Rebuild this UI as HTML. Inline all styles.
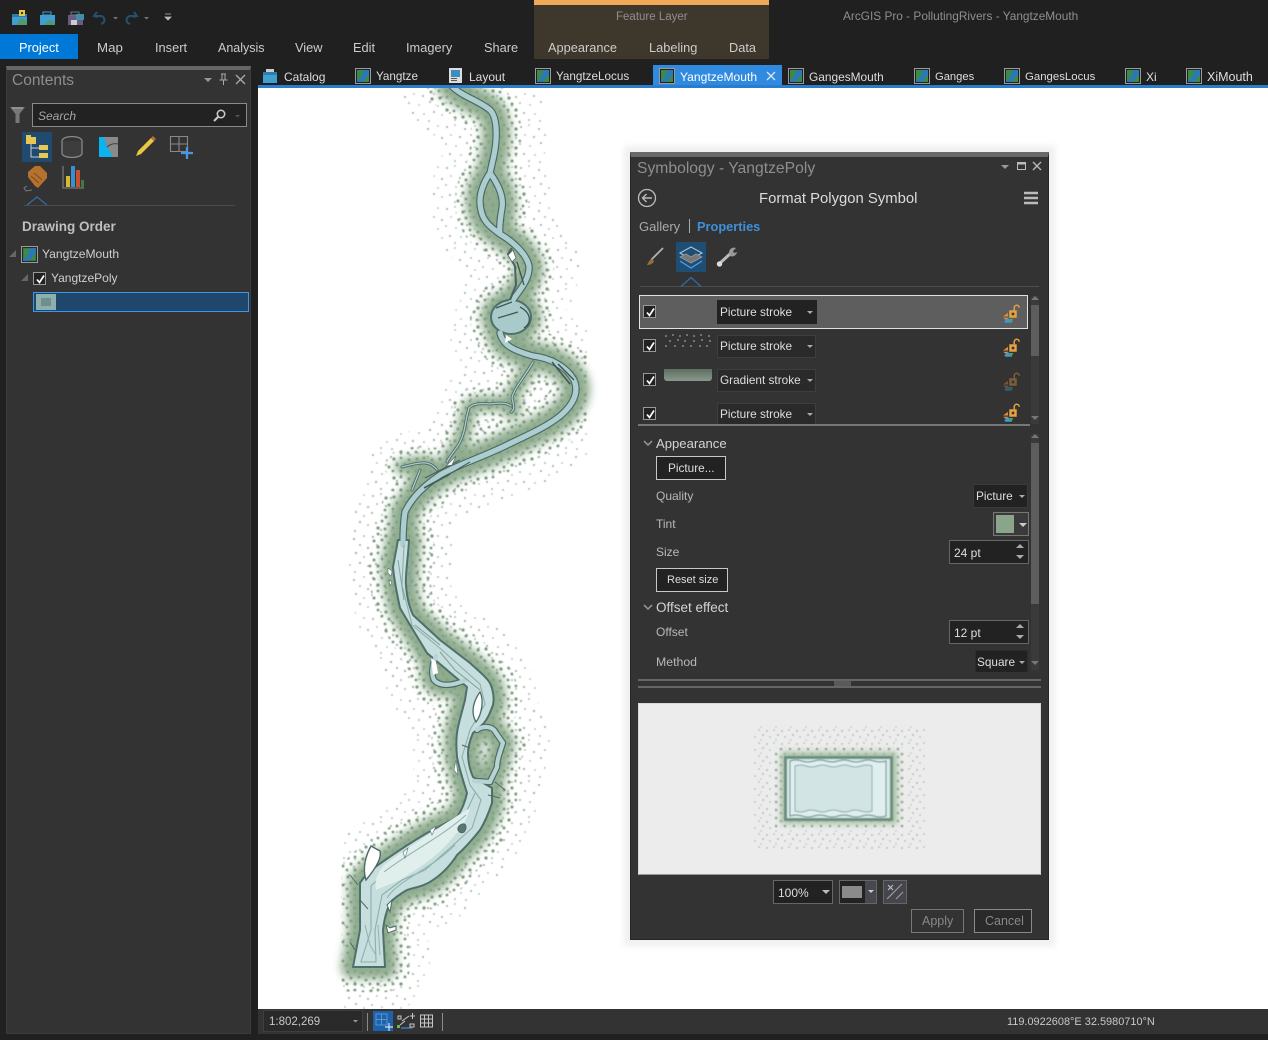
<!DOCTYPE html>
<html lang="en"><head><meta charset="utf-8"><title>ArcGIS Pro - PollutingRivers - YangtzeMouth</title>
<style>
html,body{margin:0;padding:0;background:#202020}
#r{position:relative;width:1268px;height:1040px;overflow:hidden;background:#202020;font-family:"Liberation Sans",sans-serif;font-size:12px;color:#ccc}
#r div,#r svg{position:absolute}
.t{white-space:nowrap;line-height:16px;height:16px;font-size:12px;color:#ccc}
.m{font-size:12.800px;top:40px}
.k{top:69px;color:#ddd;font-size:11.700px}
.s{font-size:11.800px;color:#dedede}
.b{box-sizing:border-box}
.dd{box-sizing:border-box;background:#222;border:1px solid #4a4a4a}
.btn{box-sizing:border-box;background:#222;border:1px solid #c8c8c8}
.ar{width:0;height:0;border-left:3px solid transparent;border-right:3px solid transparent;border-top:3px solid #aaa}
.up{width:0;height:0;border-left:4px solid transparent;border-right:4px solid transparent;border-bottom:4px solid #aaa}
.dn{width:0;height:0;border-left:4px solid transparent;border-right:4px solid transparent;border-top:4px solid #aaa}
.cb{box-sizing:border-box;width:13px;height:13px;background:#222;border:1px solid #999}
</style></head><body><div id="r">

<svg width="0" height="0" style="left:0;top:0"><defs>
<symbol id="mi" viewBox="0 0 16 16"><rect x=".5" y=".5" width="15" height="15" fill="#222" stroke="#9a9a9a"/><rect x="2" y="2" width="12" height="12" fill="#3a8a4a"/><path d="M9 2h5v5l-3 2-1 3-4 2H2v-2l4-2 1-4z" fill="#2b78b8"/></symbol>
<g id="lk"><path d="M0 6l4-3v3zM0 7h4v3z" fill="#e08a3a"/><path d="M1 10l3-3 3 4H2z" fill="#3a9ad8"/><path d="M5 8h3l-1 3z" fill="#5aa84a"/><rect x="5" y="1" width="6" height="6" fill="#e8a040"/><rect x="7" y="3" width="2" height="2" fill="#333"/><path d="M9 1V-1a2 2 0 0 1 4 0" fill="none" stroke="#e8a040" stroke-width="1.200"/></g>
<path id="chk" d="M3 6.500l2.500 3L10 2.500" fill="none" stroke="#fff" stroke-width="1.700"/>
</defs></svg>

<!-- quick access -->
<svg style="left:0;top:0" width="190" height="34">
<rect x="12" y="14" width="15" height="11" fill="#3f9fd0"/><rect x="12" y="14" width="15" height="3" fill="#2c7ea8"/><path d="M16 25l5-7 6 3v4z" fill="#4f9a70"/><rect x="19" y="10" width="6" height="6" fill="#e8c840"/><rect x="21" y="12" width="2" height="2" fill="#333"/>
<rect x="40" y="15" width="15" height="10" fill="#3f9fd0"/><rect x="43" y="12" width="8" height="3" fill="none" stroke="#3f9fd0"/><path d="M44 25l5-5 6 2v3z" fill="#4f9a70"/>
<rect x="68" y="15" width="15" height="10" fill="#6a5a88"/><rect x="71" y="12" width="8" height="3" fill="none" stroke="#6a7a88"/><rect x="76" y="14" width="8" height="6" fill="#3f8fa8"/><rect x="71" y="20" width="6" height="5" fill="#ccc"/>
<path d="M97 12l-3 4 4 1M94 16h7a4 4 0 0 1 2 7l-2 1" fill="none" stroke="#27506f" stroke-width="2"/><path d="M113 17h5l-2.500 2.500z" fill="#777"/>
<path d="M134 12l3 4-4 1M137 16h-7a4 4 0 0 0-2 7l2 1" fill="none" stroke="#27506f" stroke-width="2"/><path d="M144 17h5l-2.500 2.500z" fill="#777"/>
<path d="M165 14h6M165 17h6l-3 3z" stroke="#bbb" fill="#bbb" stroke-width=".8"/>
</svg>

<!-- ribbon -->
<div style="left:534px;top:0;width:235px;height:59px;background:#3e382c"></div>
<div style="left:534px;top:0;width:235px;height:5px;background:#f0a957"></div>
<div class="t" style="left:616px;top:9px;color:#8f8f8f;font-size:11.500px">Feature Layer</div>
<div class="t" style="left:843px;top:8px;color:#8f8f8f;font-size:11.850px">ArcGIS Pro - PollutingRivers - YangtzeMouth</div>
<div style="left:0;top:34px;width:78px;height:25px;background:#0078d7"></div>
<div class="t m" style="left:19px;color:#fff">Project</div>
<div class="t m" style="left:97px;font-size:13.300px">Map</div>
<div class="t m" style="left:155px">Insert</div>
<div class="t" style="left:218px;top:40px;font-size:12.500px">Analysis</div>
<div class="t m" style="left:295px">View</div>
<div class="t m" style="left:353px">Edit</div>
<div class="t m" style="left:406px">Imagery</div>
<div class="t m" style="left:484px">Share</div>
<div class="t m" style="left:548px">Appearance</div>
<div class="t m" style="left:649px">Labeling</div>
<div class="t m" style="left:729px">Data</div>

<!-- tabs -->
<div style="left:653px;top:65px;width:129px;height:21px;background:#2f8ae0"></div>
<div style="left:258px;top:85px;width:1010px;height:3px;background:#2a7ccc"></div>
<svg style="left:262px;top:68px" width="16" height="16"><rect x="1" y="4" width="14" height="11" fill="#3f9fd0"/><rect x="4" y="1" width="8" height="3" fill="#ccc"/><rect x="1" y="4" width="14" height="3" fill="#2c7ea8"/></svg>
<svg style="left:355px;top:68px" width="16" height="16"><use href="#mi"/></svg>
<svg style="left:448px;top:68px" width="16" height="16"><rect x="1" y="0" width="13" height="15" fill="#ddd"/><rect x="3" y="2" width="9" height="7" fill="#3a8fc0"/><rect x="3" y="10" width="6" height="1" fill="#555"/><rect x="3" y="12" width="6" height="1" fill="#555"/></svg>
<svg style="left:535px;top:68px" width="16" height="16"><use href="#mi"/></svg>
<svg style="left:659px;top:68px" width="16" height="16"><use href="#mi"/></svg>
<svg style="left:788px;top:68px" width="16" height="16"><use href="#mi"/></svg>
<svg style="left:914px;top:68px" width="16" height="16"><use href="#mi"/></svg>
<svg style="left:1004px;top:68px" width="16" height="16"><use href="#mi"/></svg>
<svg style="left:1125px;top:68px" width="16" height="16"><use href="#mi"/></svg>
<svg style="left:1186px;top:68px" width="16" height="16"><use href="#mi"/></svg>
<div class="t k" style="left:284px;font-size:12px">Catalog</div>
<div class="t k" style="left:376px">Yangtze</div>
<div class="t k" style="left:469px;font-size:12px">Layout</div>
<div class="t k" style="left:556px">YangtzeLocus</div>
<div class="t k" style="left:680px;color:#fff;font-size:12.100px">YangtzeMouth</div>
<svg style="left:766px;top:71px" width="10" height="10"><path d="M1 1l8 8M9 1L1 9" stroke="#dbe9f7" stroke-width="1.300"/></svg>
<div class="t k" style="left:809px;font-size:11.900px">GangesMouth</div>
<div class="t k" style="left:935px;font-size:11.200px">Ganges</div>
<div class="t k" style="left:1025px;font-size:11.400px">GangesLocus</div>
<div class="t k" style="left:1146px;font-size:12px">Xi</div>
<div class="t k" style="left:1207px;font-size:12.500px">XiMouth</div>

<!-- left pane -->
<div class="b" style="left:6px;top:66px;width:245px;height:968px;background:#333;border:1px solid #3c3c3c;border-top:4px solid #666"></div>
<div class="t" style="left:12px;top:73px;font-size:15.500px;color:#8e8e8e">Contents</div>
<svg style="left:200px;top:72px" width="50" height="16"><path d="M4 6h8l-4 4z" fill="#999"/><path d="M21 2h5M22 2v6h3V2M19.500 8h8M23.500 8v5" stroke="#aaa" fill="none"/><path d="M36 3l9 9M45 3l-9 9" stroke="#aaa" stroke-width="1.300"/></svg>
<svg style="left:9px;top:105px" width="18" height="20"><path d="M1 2h15l-5.500 7v9h-4V9z" fill="#777"/><path d="M3 3h11" stroke="#aaa"/></svg>
<div class="b" style="left:32px;top:103px;width:215px;height:24px;background:#222;border:1px solid #8a8a8a"></div>
<div class="t" style="left:38px;top:108px;font-style:italic;color:#a5a5a5">Search</div>
<svg style="left:212px;top:108px" width="30" height="16"><circle cx="9" cy="6" r="3.700" fill="none" stroke="#ccc" stroke-width="1.500"/><path d="M6 9l-4 4" stroke="#ccc" stroke-width="2"/><path d="M23 7h5l-2.500 2.500z" fill="#555"/></svg>
<div style="left:22px;top:132px;width:30px;height:30px;background:#1f4b70"></div>
<svg style="left:22px;top:132px" width="240" height="80">
<path d="M9 11v14h9M9 16h9" stroke="#ccc" fill="none"/><rect x="4" y="5" width="10" height="7" fill="#e8c850"/><rect x="4" y="3" width="5" height="2" fill="#e8c850"/><rect x="17" y="13" width="9" height="5" fill="#e8c850"/><rect x="17" y="21" width="9" height="5" fill="#e8c850"/>
<ellipse cx="50" cy="9" rx="10" ry="4.500" fill="none" stroke="#888" stroke-width="1.300"/><path d="M40 9v12c0 3 5 4.500 10 4.500s10-1.500 10-4.500V9" fill="#3d3d3d" stroke="#888" stroke-width="1.300"/>
<rect x="77" y="5" width="19" height="20" fill="#8a8a8a"/><path d="M77 5h5l3 10 6 10H77z" fill="#0ab4ef"/><path d="M85 15c3-3 8-4 11-3" stroke="#444" fill="none"/>
<path d="M114 24l2-5L129 6l3 3-13 13z" fill="#e8c840"/><path d="M129 6l2-2 3 3-2 2z" fill="#b56a3a"/>
<path d="M148.500 4.500h17v15h-17zM148.500 12h17M157 4.500v15" fill="none" stroke="#888" stroke-width="1.100"/><path d="M159 21h12M165 15v12" stroke="#4a96e0" stroke-width="2.300"/>
<path d="M6 40l7-6 5 0 7 7 0 5-9 10-3-2-7-9z" fill="#b5722e"/><path d="M5 54l-3 2 2 3 6-1" stroke="#7a7a7a" fill="none"/><path d="M9 44l8 7M12 41l8 7" stroke="#7a4a1c"/>
<path d="M41 34v22h21" fill="none" stroke="#888"/><rect x="44" y="44" width="4" height="11" fill="#d8b82c"/><rect x="49" y="34" width="4" height="21" fill="#3a8fd0"/><rect x="54" y="38" width="4" height="17" fill="#c8502a"/><rect x="59" y="48" width="3" height="7" fill="#3f7a3f"/>
<path d="M2 73.500h211" stroke="#4a4a4a"/><path d="M5 73l10-8 10 8" fill="none" stroke="#2f6ca8" stroke-width="1.300"/>
</svg>
<div class="t" style="left:22px;top:219px;font-size:13.500px;color:#cfcfcf;font-weight:bold;opacity:.9">Drawing Order</div>
<svg style="left:9px;top:248px" width="30" height="40"><path d="M7 2v7H0z" fill="#666"/><path d="M19 26v7h-7z" fill="#666"/></svg>
<svg style="left:21px;top:246px" width="17" height="17"><use href="#mi"/></svg>
<div class="t" style="left:42px;top:246px;color:#cfcfcf;font-size:12.100px">YangtzeMouth</div>
<div class="cb" style="left:33px;top:272px"><svg style="left:0;top:0" width="12" height="12"><use href="#chk"/></svg></div>
<div class="t" style="left:51px;top:270px;color:#cfcfcf">YangtzePoly</div>
<div class="b" style="left:33px;top:292px;width:216px;height:20px;background:#1f476b;border:1px solid #3a97ea"></div>
<div style="left:36px;top:294px;width:20px;height:16px;background:#8eb0ad"></div>
<div style="left:41px;top:298px;width:10px;height:8px;background:#6f8e8e"></div>

<!-- map -->
<div style="left:258px;top:88px;width:1010px;height:921px;background:#fff"></div>
<svg style="left:258px;top:88px" width="1010" height="921" viewBox="258 88 1010 921">
<defs>
<pattern id="d1" width="37" height="41" patternUnits="userSpaceOnUse">
<g fill="#98a69b"><circle cx="3" cy="4" r="1"/><circle cx="11" cy="2" r=".8"/><circle cx="21" cy="6" r="1"/><circle cx="31" cy="3" r=".8"/><circle cx="7" cy="12" r=".8"/><circle cx="16" cy="14" r="1"/><circle cx="27" cy="12" r=".9"/><circle cx="35" cy="15" r="1"/><circle cx="2" cy="21" r=".9"/><circle cx="12" cy="23" r=".8"/><circle cx="23" cy="20" r="1"/><circle cx="31" cy="24" r=".8"/><circle cx="6" cy="31" r="1"/><circle cx="17" cy="32" r=".8"/><circle cx="27" cy="30" r="1"/><circle cx="35" cy="33" r=".8"/><circle cx="11" cy="38" r=".9"/><circle cx="22" cy="39" r=".9"/></g></pattern>
<pattern id="d2" width="23" height="19" patternUnits="userSpaceOnUse">
<g fill="#759878"><circle cx="3" cy="3" r="1.600"/><circle cx="10" cy="2" r="1.400"/><circle cx="18" cy="4" r="1.600"/><circle cx="6" cy="9" r="1.500"/><circle cx="14" cy="8" r="1.400"/><circle cx="21" cy="11" r="1.500"/><circle cx="2" cy="15" r="1.400"/><circle cx="10" cy="15" r="1.600"/><circle cx="17" cy="16" r="1.400"/></g></pattern>
<filter id="bl" x="-20%" y="-20%" width="140%" height="140%"><feGaussianBlur stdDeviation="4.500"/></filter>
<filter id="sf" x="-5%" y="-5%" width="110%" height="110%"><feGaussianBlur stdDeviation=".5"/></filter>
<filter id="sr" x="-5%" y="-5%" width="110%" height="110%"><feGaussianBlur stdDeviation=".35"/></filter>
<path id="up" d="M450 84C460 96 478 100 490 110C498 118 497 140 494 155L490 173M490 173C482 185 478 198 481 210C483 222 492 228 500 234M490 173C498 184 504 196 502 208C500 220 499 228 500 234C510 240 526 252 529 266C530 280 518 292 510 304M500 333C503 345 512 350 533 356C550 358 566 366 574 380C579 392 574 404 560 416C545 428 525 436 505 446C480 458 455 466 440 475C425 485 412 497 405 512C403 525 403 535 403 545"/>
<path id="tr" d="M533 362C524 378 514 388 512 398C514 406 515 410 511 412M511 406C506 402 498 403 490 404C480 403 472 404 469 408C465 420 466 430 460 442C456 450 450 455 447 462M437 470C430 460 420 462 402 467M420 470L412 490"/>
<path id="lo" d="M477 730C482 726 490 726 494 730L503 743C500 752 497 760 497 767C494 774 491 779 490 782L474 781M436 656C432 665 431 674 434 680C440 687 452 686 466 680"/>
<path id="low" d="M409 540C408 560 405 575 406 585C407 600 410 608 413 615L440 640L470 663C480 672 486 677 490 683C494 692 494 700 493 705C490 713 488 718 484 723C478 729 476 731 473 733C470 740 468 746 468 753C468 762 470 770 473 777L492 788L492 803C488 815 485 822 480 830C472 840 465 848 457 855C450 866 442 874 433 880C425 886 416 887 407 890C400 894 394 898 390 903C386 912 384 920 383 930L385 967L353 967L360 930L360 883C365 875 372 869 378 865C395 853 410 843 427 833C438 827 448 822 457 817C462 810 465 802 467 793C463 780 459 768 457 757C456 746 456 736 458 727C460 718 463 708 465 700L467 687L427 653C418 638 408 622 400 608C397 594 394 580 393 567L398 540Z"/>
<ellipse id="bb" cx="511" cy="317" rx="20" ry="17"/>
</defs>
<!-- outer sparse dots -->
<g filter="url(#sf)">
<g fill="none" stroke="url(#d1)" stroke-linejoin="round" stroke-linecap="round">
<use href="#up" stroke-width="100"/><use href="#lo" stroke-width="96"/><use href="#low" stroke-width="90"/><use href="#tr" stroke-width="66"/>
</g>
<use href="#low" fill="url(#d1)"/>
<!-- dense dots -->
<g fill="none" stroke="url(#d2)" stroke-linejoin="round" stroke-linecap="round">
<use href="#up" stroke-width="50"/><use href="#lo" stroke-width="46"/><use href="#low" stroke-width="50"/><use href="#tr" stroke-width="34"/><use href="#bb" stroke-width="42"/>
</g>
</g>
<!-- green glow -->
<g fill="none" stroke="#84a484" stroke-linejoin="round" stroke-linecap="round" filter="url(#bl)" opacity=".9">
<use href="#up" stroke-width="28"/><use href="#lo" stroke-width="24"/><use href="#low" stroke-width="24" fill="#84a484"/><use href="#tr" stroke-width="15"/><use href="#bb" stroke-width="20" fill="#84a484"/>
</g>
<g filter="url(#sr)">
<!-- casing -->
<g fill="none" stroke-linejoin="round" stroke-linecap="round">
<use href="#up" stroke="#4d6864" stroke-width="7.500"/><use href="#tr" stroke="#4d6864" stroke-width="3"/><use href="#lo" stroke="#4d6864" stroke-width="6.500"/>
<use href="#low" stroke="#4f6f6b" stroke-width="2" fill="#c6dedd"/><use href="#bb" stroke="#4f6f6b" stroke-width="2" fill="#a9caca"/>
<use href="#up" stroke="#acced0" stroke-width="5.200"/><use href="#tr" stroke="#acced0" stroke-width="1.300"/><use href="#lo" stroke="#b6d4d3" stroke-width="4.200"/>
</g>
<!-- interior of estuary -->
<path d="M404 545L402 585L412 625L442 650L480 684L485 704L470 730L462 757L470 785L481 800L472 828L450 848L425 870L402 880L382 895L375 930L376 962L361 962L371 930L371 886L388 870L430 842L460 826L475 793" fill="none" stroke="#8caeac" stroke-width="1.100"/>
<path d="M400 880C415 870 435 860 455 835C465 825 468 815 470 808C450 820 420 840 388 862C378 870 374 880 376 890Z" fill="#e0eeec"/>
<path d="M387 898C398 880 430 870 455 845" fill="none" stroke="#8fb2b0"/>
<path d="M384 872C410 852 440 838 466 815" fill="none" stroke="#8fb2b0"/>
<path d="M412 545L410 590M398 560L404 600" stroke="#7fa6a4" fill="none"/>
<path d="M365 925L370 945L376 955M378 925L380 955" stroke="#8fb2b0" fill="none"/>
<path d="M440 652L455 670L480 690M415 625L440 645" stroke="#7d9f9d" fill="none"/>
<!-- islands -->
<path d="M366 880C362 868 366 855 371 846L380 851C382 858 376 868 366 880Z" fill="#fff" stroke="#4c6a66" stroke-width="1.400"/>
<path d="M476 722C470 712 474 700 480 692C484 700 482 714 476 722Z" fill="#fff" stroke="#4c6a66" stroke-width="1.300"/>
<path d="M459 826C456 830 460 834 464 832C468 828 466 820 459 826Z" fill="#5a7672" stroke="#4c6663"/>
<path d="M431 658L436 662L438 673L433 675Z" fill="#fff"/>
<path d="M430 830L436 826L432 835ZM403 852L408 848L405 858ZM388 568L392 571L391 576L388 573ZM389 580L392 582L390 586ZM456 760L458 775L454 770Z" fill="#fff" stroke="#5a7470" stroke-width=".6"/>
<path d="M386 925L390 928L396 926L396 930L388 933ZM387 905L392 900L390 912Z" fill="#fff" stroke="#4c6a66"/>
<path d="M368 909L360 900M355 950L350 942M358 885L350 875M495 782L505 790M500 798L488 795M470 748L462 745" stroke="#4c6a66"/>
<!-- upper details -->
<path d="M512 248L508 254L515 266L516 285L510 300" fill="none" stroke="#4c6260" stroke-width="2"/>
<path d="M508 255L513 250L516 258L512 262Z" fill="#fff" stroke="#4c6a66" stroke-width=".8"/>
<path d="M517 262L524 285" fill="none" stroke="#3e5450" stroke-width="1.300"/>
<path d="M436 482L470 462M425 478L460 460" fill="none" stroke="#4a605c" stroke-width="1.200"/>
<path d="M496 308L512 302M498 318L518 312M520 307C530 312 533 322 524 328" stroke="#3f5450" stroke-width="1.300" fill="none"/>
<path d="M506 335L512 339L505 343Z" fill="#fff"/>
<path d="M558 364L574 380M552 362L570 384" fill="none" stroke="#3f5450" stroke-width="1.500"/>
<path d="M450 474L424 488" stroke="#435b58" stroke-width="1.600"/>
<path d="M446 466L452 460L456 456L452 465Z" fill="#fff" stroke="#4c6a66" stroke-width=".6"/>
</g>
</svg>

<!-- status bar -->
<div style="left:258px;top:1009px;width:1010px;height:31px;background:#333"></div>
<div style="left:0;top:1034px;width:1268px;height:6px;background:#202020"></div>
<div class="b" style="left:263px;top:1010px;width:100px;height:22px;background:#2a2a2a;border:1px solid #3e3e3e"></div>
<div class="t" style="left:269px;top:1014px;color:#c8c8c8;font-size:11.500px">1:802,269</div>
<svg style="left:352px;top:1010px" width="130" height="24">
<path d="M1 10h5l-2.500 2.500z" fill="#999"/>
<path d="M15.500 3v18M90.500 3v18" stroke="#8a8a8a"/>
<rect x="21" y="1" width="20" height="20" fill="#1c62ad"/>
<path d="M24 4h11v11H24zM29.500 4v11M24 9.500h11" fill="none" stroke="#5d93c8"/><path d="M33 17h8M37 13v8" stroke="#cfe2f5" stroke-width="1.200"/>
<path d="M46 6h3v3h-3zM58 14h4v3h-4zM50 11l7-5M48 15l5-4" stroke="#c8c8c8" fill="none"/><path d="M58 6h5M60.500 3v6" stroke="#c8c8c8"/><rect x="45" y="15" width="3" height="3" fill="#5fbe5f"/><path d="M49 18h11" stroke="#3f8fd8" stroke-width="1.200"/>
<path d="M68.500 5h12v12h-12zM72.500 5v12M76.500 5v12M68.500 9h12M68.500 13h12" fill="none" stroke="#c8c8c8"/>
</svg>
<div class="t" style="left:1007px;top:1014px;color:#c8c8c8;font-size:10.950px">119.0922608°E 32.5980710°N</div>

<!-- symbology pane -->
<div style="left:624px;top:146px;width:431px;height:800px;background:rgba(0,0,0,.06);filter:blur(3px)"></div>
<div class="b" style="left:630px;top:152px;width:419px;height:788px;background:#333;border:1px solid #262626;border-top:5px solid #6a6a6a"></div>
<div class="t" style="left:637px;top:161px;font-size:15.700px;color:#8e8e8e">Symbology - YangtzePoly</div>
<svg style="left:998px;top:158px" width="48" height="16"><path d="M3 7h8l-4 4z" fill="#999"/><rect x="19.500" y="4.500" width="8" height="7" fill="none" stroke="#bbb"/><path d="M19.500 5.500h8" stroke="#bbb" stroke-width="2"/><path d="M35 4l8 8M43 4l-8 8" stroke="#bbb" stroke-width="1.300"/></svg>
<svg style="left:637px;top:188px" width="20" height="20"><circle cx="10" cy="10" r="8.500" fill="none" stroke="#bbb" stroke-width="1.300"/><path d="M15 10H6M9.500 6L5.500 10l4 4" fill="none" stroke="#bbb" stroke-width="1.400"/></svg>
<div class="t" style="left:759px;top:191px;font-size:14.850px;color:#dcdcdc">Format Polygon Symbol</div>
<svg style="left:1024px;top:191px" width="15" height="14"><path d="M0 2h14M0 7h14M0 12h14" stroke="#bbb" stroke-width="2.600"/></svg>
<div class="t" style="left:639px;top:219px;font-size:13px;color:#aaa">Gallery</div>
<div style="left:689px;top:219px;width:1px;height:14px;background:#aaa"></div>
<div class="t" style="left:697px;top:219px;font-size:12.800px;color:#3f98ea;font-weight:bold;opacity:.92">Properties</div>
<svg style="left:644px;top:246px" width="22" height="22"><path d="M19 2L7 14" stroke="#b5b5b5" stroke-width="1.700"/><path d="M8 13l2 2c-1 3-4 4-7 4 1-2 2-5 5-6z" fill="#9a6a3a"/></svg>
<div style="left:676px;top:242px;width:30px;height:30px;background:#1f4e75"></div>
<svg style="left:676px;top:242px" width="30" height="30"><path d="M15 5l11 6-11 6-11-6z" fill="none" stroke="#a8c4d8" stroke-width="1.100"/><path d="M4 15l11 6 11-6-6-3-5 3-5-3z" fill="#777" stroke="#999" stroke-width=".8"/><path d="M4 19l11 7 11-7" fill="none" stroke="#4da2ea" stroke-width="1.200"/></svg>
<svg style="left:716px;top:246px" width="22" height="22"><path d="M3 18L15 7" stroke="#bbb" stroke-width="3"/><circle cx="3.500" cy="18" r="2.700" fill="#ddd"/><path d="M13 7a5 5 0 0 1 7-5l-3 3 1 2 3-1a5 5 0 0 1-7 4" fill="#999"/></svg>
<svg style="left:640px;top:276px" width="400" height="12"><path d="M0 10.500h399" stroke="#4e4e4e"/><path d="M41 10.500l10-9 10 9" fill="none" stroke="#2f6ca8" stroke-width="1.300"/></svg>

<!-- symbol layers -->
<div class="b" style="left:639px;top:295px;width:389px;height:34px;background:#5e5e5e;border:1px solid #e2e2e2"></div>
<div style="left:717px;top:300px;width:100px;height:24px;background:#222"></div>
<div class="dd" style="left:717px;top:335px;width:99px;height:23px;border-color:#3e3e3e;background:#2a2a2a"></div>
<div class="dd" style="left:717px;top:369px;width:99px;height:23px;border-color:#3e3e3e;background:#2a2a2a"></div>
<div class="dd" style="left:717px;top:403px;width:99px;height:21px;border-bottom:0;border-color:#3e3e3e;background:#2a2a2a"></div>
<div class="cb" style="left:643px;top:305px"><svg style="left:0;top:0" width="12" height="12"><use href="#chk"/></svg></div>
<div class="cb" style="left:643px;top:339px"><svg style="left:0;top:0" width="12" height="12"><use href="#chk"/></svg></div>
<div class="cb" style="left:643px;top:373px"><svg style="left:0;top:0" width="12" height="12"><use href="#chk"/></svg></div>
<div class="cb" style="left:643px;top:407px"><svg style="left:0;top:0" width="12" height="12"><use href="#chk"/></svg></div>
<div class="t s" style="left:720px;top:304px">Picture stroke</div>
<div class="t s" style="left:720px;top:338px">Picture stroke</div>
<div class="t s" style="left:720px;top:372px">Gradient stroke</div>
<div class="t s" style="left:720px;top:406px">Picture stroke</div>
<div class="ar" style="left:807px;top:311px"></div><div class="ar" style="left:807px;top:345px"></div><div class="ar" style="left:807px;top:379px"></div><div class="ar" style="left:807px;top:413px"></div>
<svg style="left:664px;top:333px" width="50" height="16"><g fill="#7a7a7a"><circle cx="2" cy="3" r="1.100"/><circle cx="9" cy="2" r="1.100"/><circle cx="16" cy="3" r="1.100"/><circle cx="23" cy="2" r="1.100"/><circle cx="30" cy="3" r="1.100"/><circle cx="37" cy="2" r="1.100"/><circle cx="45" cy="3" r="1.100"/><circle cx="6" cy="8" r="1.100"/><circle cx="14" cy="7" r="1.100"/><circle cx="21" cy="8" r="1.100"/><circle cx="30" cy="8" r="1.100"/><circle cx="38" cy="7" r="1.100"/><circle cx="46" cy="8" r="1.100"/><circle cx="2" cy="13" r="1.100"/><circle cx="11" cy="13" r="1.100"/><circle cx="19" cy="13" r="1.100"/><circle cx="27" cy="13" r="1.100"/><circle cx="36" cy="13" r="1.100"/><circle cx="43" cy="13" r="1.100"/></g></svg>
<div style="left:664px;top:369px;width:48px;height:12px;border-radius:0 0 3px 3px;background:linear-gradient(#5d6e60,#89988c)"></div>
<svg style="left:1002px;top:303px" width="18" height="120"><use href="#lk" transform="translate(1 6) scale(1.250)"/><use href="#lk" transform="translate(1 40) scale(1.250)"/><use href="#lk" transform="translate(1 74) scale(1.250)" opacity=".4"/><use href="#lk" transform="translate(1 105) scale(1.250)"/></svg>
<div style="left:1031px;top:296px;width:8px;height:128px;background:#3a3a3a"></div>
<div style="left:1031px;top:305px;width:8px;height:51px;background:#5d5d5d"></div>
<div class="up" style="left:1031px;top:296px;border-bottom-color:#777"></div>
<div class="dn" style="left:1031px;top:416px;border-top-color:#777"></div>
<div style="left:638px;top:424px;width:392px;height:2px;background:#777"></div>

<!-- properties -->
<svg style="left:643px;top:439px" width="12" height="174"><path d="M1 2l4 4 4-4" fill="none" stroke="#999" stroke-width="1.500"/><path d="M1 166l4 4 4-4" fill="none" stroke="#999" stroke-width="1.500"/></svg>
<div class="t" style="left:656px;top:436px;font-size:13.100px;color:#d4d4d4">Appearance</div>
<div class="btn" style="left:656px;top:456px;width:70px;height:24px"></div>
<div class="t" style="left:668px;top:460px;color:#dedede;font-size:11.800px">Picture...</div>
<div class="t" style="left:656px;top:488px;color:#b8b8b8">Quality</div>
<div class="dd" style="left:973px;top:484px;width:55px;height:24px;border-color:#3a3a3a"></div>
<div class="t s" style="left:976px;top:488px">Picture</div>
<div class="ar" style="left:1019px;top:495px"></div>
<div class="t" style="left:656px;top:516px;color:#b8b8b8">Tint</div>
<div class="dd" style="left:993px;top:512px;width:36px;height:24px;border-color:#777;background:#3a3a3a"></div>
<div style="left:996px;top:515px;width:18px;height:18px;background:#8ba58a"></div>
<div class="ar" style="left:1019px;top:523px;border-left-width:4px;border-right-width:4px;border-top-width:4px;border-top-color:#ccc"></div>
<div class="t" style="left:656px;top:544px;color:#b8b8b8">Size</div>
<div class="dd" style="left:949px;top:540px;width:80px;height:24px;border-color:#666"></div>
<div class="t" style="left:954px;top:545px;color:#dedede">24 pt</div>
<div class="up" style="left:1016px;top:544px"></div><div class="dn" style="left:1016px;top:555px"></div>
<div class="btn" style="left:656px;top:568px;width:72px;height:24px"></div>
<div class="t" style="left:667px;top:572px;color:#dedede;font-size:11px">Reset size</div>
<div class="t" style="left:656px;top:600px;font-size:13.500px;color:#d4d4d4">Offset effect</div>
<div class="t" style="left:656px;top:624px;color:#b8b8b8">Offset</div>
<div class="dd" style="left:949px;top:620px;width:80px;height:24px;border-color:#666"></div>
<div class="t" style="left:954px;top:625px;color:#dedede">12 pt</div>
<div class="up" style="left:1016px;top:624px"></div><div class="dn" style="left:1016px;top:635px"></div>
<div class="t" style="left:656px;top:654px;color:#b8b8b8;font-size:12.300px">Method</div>
<div class="dd" style="left:975px;top:650px;width:53px;height:22px;border-color:#2c2c2c;border-bottom:0"></div>
<div class="t s" style="left:977px;top:654px">Square</div>
<div class="ar" style="left:1019px;top:661px"></div>
<div style="left:1031px;top:434px;width:8px;height:236px;background:#3a3a3a"></div>
<div style="left:1031px;top:443px;width:8px;height:161px;background:#5d5d5d"></div>
<div class="up" style="left:1031px;top:434px;border-bottom-color:#777"></div>
<div class="dn" style="left:1031px;top:661px;border-top-color:#777"></div>
<div style="left:638px;top:679px;width:403px;height:2px;background:#666"></div>
<div style="left:638px;top:686px;width:403px;height:2px;background:#666"></div>
<div style="left:834px;top:681px;width:17px;height:5px;background:#5a5a5a"></div>

<!-- preview -->
<div class="b" style="left:638px;top:703px;width:403px;height:172px;background:#ececec;border:1px solid #d8d8d8;border-bottom-color:#999"></div>
<svg style="left:638px;top:703px" width="403" height="172" viewBox="638 703 403 172">
<defs><pattern id="p1" width="15" height="13" patternUnits="userSpaceOnUse"><g fill="#b4beb6"><circle cx="2" cy="3" r="1"/><circle cx="9" cy="2" r=".9"/><circle cx="13" cy="7" r="1"/><circle cx="5" cy="9" r=".9"/><circle cx="11" cy="12" r=".8"/></g></pattern>
<pattern id="p2" width="9" height="8" patternUnits="userSpaceOnUse"><g fill="#86a489"><circle cx="2" cy="2" r="1.300"/><circle cx="7" cy="5" r="1.300"/></g></pattern>
<filter id="pb" x="-20%" y="-20%" width="140%" height="140%"><feGaussianBlur stdDeviation="3"/></filter>
<filter id="ps" x="-5%" y="-5%" width="110%" height="110%"><feGaussianBlur stdDeviation=".4"/></filter></defs>
<g filter="url(#ps)">
<path d="M754 726h171v124H754zM773 745v85h133v-85z" fill="url(#p1)" fill-rule="evenodd"/>
<rect x="775" y="747" width="129" height="81" fill="url(#p2)"/>
<rect x="781" y="752" width="116" height="72" fill="#a7c0a5" filter="url(#pb)"/>
<rect x="785.500" y="757.500" width="106" height="62" fill="#d8e8e8" stroke="#6a8f7d" stroke-width="3"/>
<path d="M790 761q6-2 12 0t12 0 12 0 12 0 12 0 12 0 12 0 12 0 V816q-6 2-12 0t-12 0-12 0-12 0-12 0-12 0-12 0-12 0Z" fill="#dfeeee" stroke="#5b8585"/>
<path d="M795 766q6-2 11 0t11 0 11 0 11 0 11 0 11 0 11 0V811q-5 2-11 0t-11 0-11 0-11 0-11 0-11 0-11 0Z" fill="#d2e5e4" stroke="#87abab"/>
</g>
</svg>

<div class="dd" style="left:773px;top:880px;width:60px;height:24px;border-color:#666;background:#222"></div>
<div class="t" style="left:778px;top:885px;color:#dedede">100%</div>
<div class="ar" style="left:822px;top:890px;border-left-width:4px;border-right-width:4px;border-top-width:4px;border-top-color:#bbb"></div>
<div class="dd" style="left:839px;top:880px;width:38px;height:24px;border-color:#666;background:#222"></div>
<div style="left:865px;top:881px;width:11px;height:22px;background:#484850"></div>
<div style="left:842px;top:886px;width:20px;height:12px;background:#8a8a8a"></div>
<div class="ar" style="left:868px;top:890px;border-top-color:#ccc"></div>
<div class="dd" style="left:883px;top:880px;width:24px;height:24px;border-color:#666;background:#45454d"></div>
<svg style="left:884px;top:881px" width="22" height="22"><path d="M3 18L18 3M12 18L19 11" stroke="#999" stroke-width="1.200" fill="none"/><path d="M4 4l5 5M9 4L4 9" stroke="#bbb" stroke-width="1.200"/></svg>
<div class="b" style="left:911px;top:909px;width:53px;height:24px;border:1px solid #777"></div>
<div class="t" style="left:922px;top:913px;color:#888;font-size:12.500px">Apply</div>
<div class="b" style="left:974px;top:909px;width:58px;height:24px;border:1px solid #8a8a8a;background:#2a2a2a"></div>
<div class="t" style="left:985px;top:913px;color:#888;font-size:12.500px">Cancel</div>

</div></body></html>
